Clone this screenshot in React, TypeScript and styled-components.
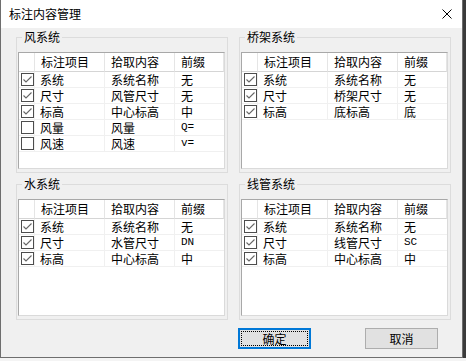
import React from "react";
import styled, { createGlobalStyle } from "styled-components";

const GlobalStyle = createGlobalStyle`
  html, body {
    margin: 0;
    padding: 0;
    background: #f4f4f4;
  }
  body {
    font-family: "Noto Sans CJK SC", "Noto Sans", sans-serif;
    font-size: 12px;
    color: #000;
  }
`;

const Screen = styled.div`
  width: 466px;
  height: 361px;
  overflow: hidden;
`;

const TopRow = styled.div`
  display: flex;
  height: 358px;
`;

const DesktopEdge = styled.div`
  flex: 1;
  background: #3b3b3b;
`;

const Window = styled.div`
  width: 463px;
  height: 358px;
  box-sizing: border-box;
  border: 1px solid #6e6e6e;
  border-top: none;
  background: #f0f0f0;
  display: flex;
  flex-direction: column;
`;

const TitleBar = styled.div`
  height: 28px;
  flex: none;
  background: #fff;
  display: flex;
  align-items: center;
  justify-content: space-between;
  padding: 0 10px 0 8px;
  box-sizing: border-box;
`;

const Title = styled.span`
  font-size: 12px;
  line-height: 16px;
`;

const Body = styled.div`
  padding: 1px 0 0 15px;
`;

const Groups = styled.div`
  display: grid;
  grid-template-columns: 212px 212px;
  column-gap: 11px;
  row-gap: 3px;
`;

const Group = styled.fieldset`
  margin: 0;
  height: 144px;
  box-sizing: border-box;
  border: 1px solid #dcdcdc;
  padding: 7px 2px 3px 1px;
  min-width: 0;
`;

const Legend = styled.legend`
  padding: 0 2px;
  margin-left: 4px;
  font-size: 12px;
  line-height: 16px;
`;

const List = styled.div`
  height: 117px;
  box-sizing: border-box;
  background: #fff;
  border: 1px solid #a8a8a8;
  border-right-color: #dadada;
  border-bottom-color: #dadada;
  display: grid;
  grid-template-columns: 16px 70px 70px 1fr;
  grid-template-rows: 19px;
  grid-auto-rows: 16px;
  align-content: start;
`;

const HeadCell = styled.div<{ $pad?: number }>`
  box-sizing: border-box;
  border-right: 1px solid #e5e5e5;
  border-bottom: 1px solid #d5d5d5;
  padding-left: ${(p) => p.$pad ?? 5}px;
  line-height: 17px;
  white-space: nowrap;
  &:last-child {
    border-right: none;
  }
`;

const Cell = styled.div<{ $pad?: number; $mono?: boolean; $last?: boolean }>`
  box-sizing: border-box;
  border-right: ${(p) => (p.$last ? "none" : "1px solid #f0f0f0")};
  border-bottom: 1px solid #f0f0f0;
  padding-left: ${(p) => p.$pad ?? 5}px;
  line-height: 15px;
  white-space: nowrap;
  font-family: ${(p) =>
    p.$mono
      ? '"Liberation Mono", "Noto Sans CJK SC", monospace'
      : '"Noto Sans CJK SC", sans-serif'};
  font-size: ${(p) => (p.$mono ? "11px" : "12px")};
`;

const CheckCell = styled.div`
  box-sizing: border-box;
  border-right: 1px solid #f0f0f0;
  border-bottom: 1px solid #f0f0f0;
  display: flex;
  align-items: center;
  padding-left: 2px;
`;

const Box = styled.span`
  width: 13px;
  height: 13px;
  box-sizing: border-box;
  border: 1px solid #4d4d4d;
  background: #fff;
  display: flex;
  align-items: center;
  justify-content: center;
`;

const Buttons = styled.div`
  display: flex;
  justify-content: flex-end;
  gap: 54px;
  padding-right: 24px;
  margin-top: 8px;
`;

const Button = styled.button<{ $primary?: boolean }>`
  width: 73px;
  height: 21px;
  box-sizing: border-box;
  background: #e1e1e1;
  border: ${(p) => (p.$primary ? "2px solid #0078d7" : "1px solid #adadad")};
  outline: ${(p) => (p.$primary ? "1px dotted #000" : "none")};
  outline-offset: -4px;
  font-family: "Noto Sans CJK SC", sans-serif;
  font-size: 12px;
  line-height: 16px;
  color: #000;
  padding: 0;
  margin: 0;
`;

type Row = { item: string; pick: string; prefix: string; checked: boolean };

const groups: { title: string; rows: Row[] }[] = [
  {
    title: "风系统",
    rows: [
      { item: "系统", pick: "系统名称", prefix: "无", checked: true },
      { item: "尺寸", pick: "风管尺寸", prefix: "无", checked: true },
      { item: "标高", pick: "中心标高", prefix: "中", checked: true },
      { item: "风量", pick: "风量", prefix: "Q=", checked: false },
      { item: "风速", pick: "风速", prefix: "v=", checked: false },
    ],
  },
  {
    title: "桥架系统",
    rows: [
      { item: "系统", pick: "系统名称", prefix: "无", checked: true },
      { item: "尺寸", pick: "桥架尺寸", prefix: "无", checked: true },
      { item: "标高", pick: "底标高", prefix: "底", checked: true },
    ],
  },
  {
    title: "水系统",
    rows: [
      { item: "系统", pick: "系统名称", prefix: "无", checked: true },
      { item: "尺寸", pick: "水管尺寸", prefix: "DN", checked: true },
      { item: "标高", pick: "中心标高", prefix: "中", checked: true },
    ],
  },
  {
    title: "线管系统",
    rows: [
      { item: "系统", pick: "系统名称", prefix: "无", checked: true },
      { item: "尺寸", pick: "线管尺寸", prefix: "SC", checked: true },
      { item: "标高", pick: "中心标高", prefix: "中", checked: true },
    ],
  },
];

const isLatin = (s: string) => /^[A-Za-z=]+$/.test(s);

const CheckBox = ({ checked }: { checked: boolean }) => (
  <Box>
    {checked && (
      <svg width="11" height="11" viewBox="0 0 11 11">
        <polyline
          points="1.5,5.5 4,8 9.5,2.5"
          fill="none"
          stroke="#666"
          strokeWidth="1.1"
        />
      </svg>
    )}
  </Box>
);

const CloseIcon = () => (
  <svg width="10" height="10" viewBox="0 0 10 10">
    <path d="M0.5 0.5 L9.5 9.5 M9.5 0.5 L0.5 9.5" stroke="#000" strokeWidth="1" />
  </svg>
);

export default function App() {
  return (
    <Screen>
      <GlobalStyle />
      <TopRow>
        <Window>
          <TitleBar>
            <Title>标注内容管理</Title>
            <CloseIcon />
          </TitleBar>
          <Body>
            <Groups>
              {groups.map((g) => (
                <Group key={g.title}>
                  <Legend>{g.title}</Legend>
                  <List>
                    <HeadCell />
                    <HeadCell $pad={6}>标注项目</HeadCell>
                    <HeadCell $pad={6}>拾取内容</HeadCell>
                    <HeadCell $pad={6}>前缀</HeadCell>
                    {g.rows.map((r) => (
                      <React.Fragment key={r.item}>
                        <CheckCell>
                          <CheckBox checked={r.checked} />
                        </CheckCell>
                        <Cell>{r.item}</Cell>
                        <Cell $pad={6}>{r.pick}</Cell>
                        <Cell $pad={6} $last $mono={isLatin(r.prefix)}>
                          {r.prefix}
                        </Cell>
                      </React.Fragment>
                    ))}
                  </List>
                </Group>
              ))}
            </Groups>
            <Buttons>
              <Button $primary>确定</Button>
              <Button>取消</Button>
            </Buttons>
          </Body>
        </Window>
        <DesktopEdge />
      </TopRow>
    </Screen>
  );
}
